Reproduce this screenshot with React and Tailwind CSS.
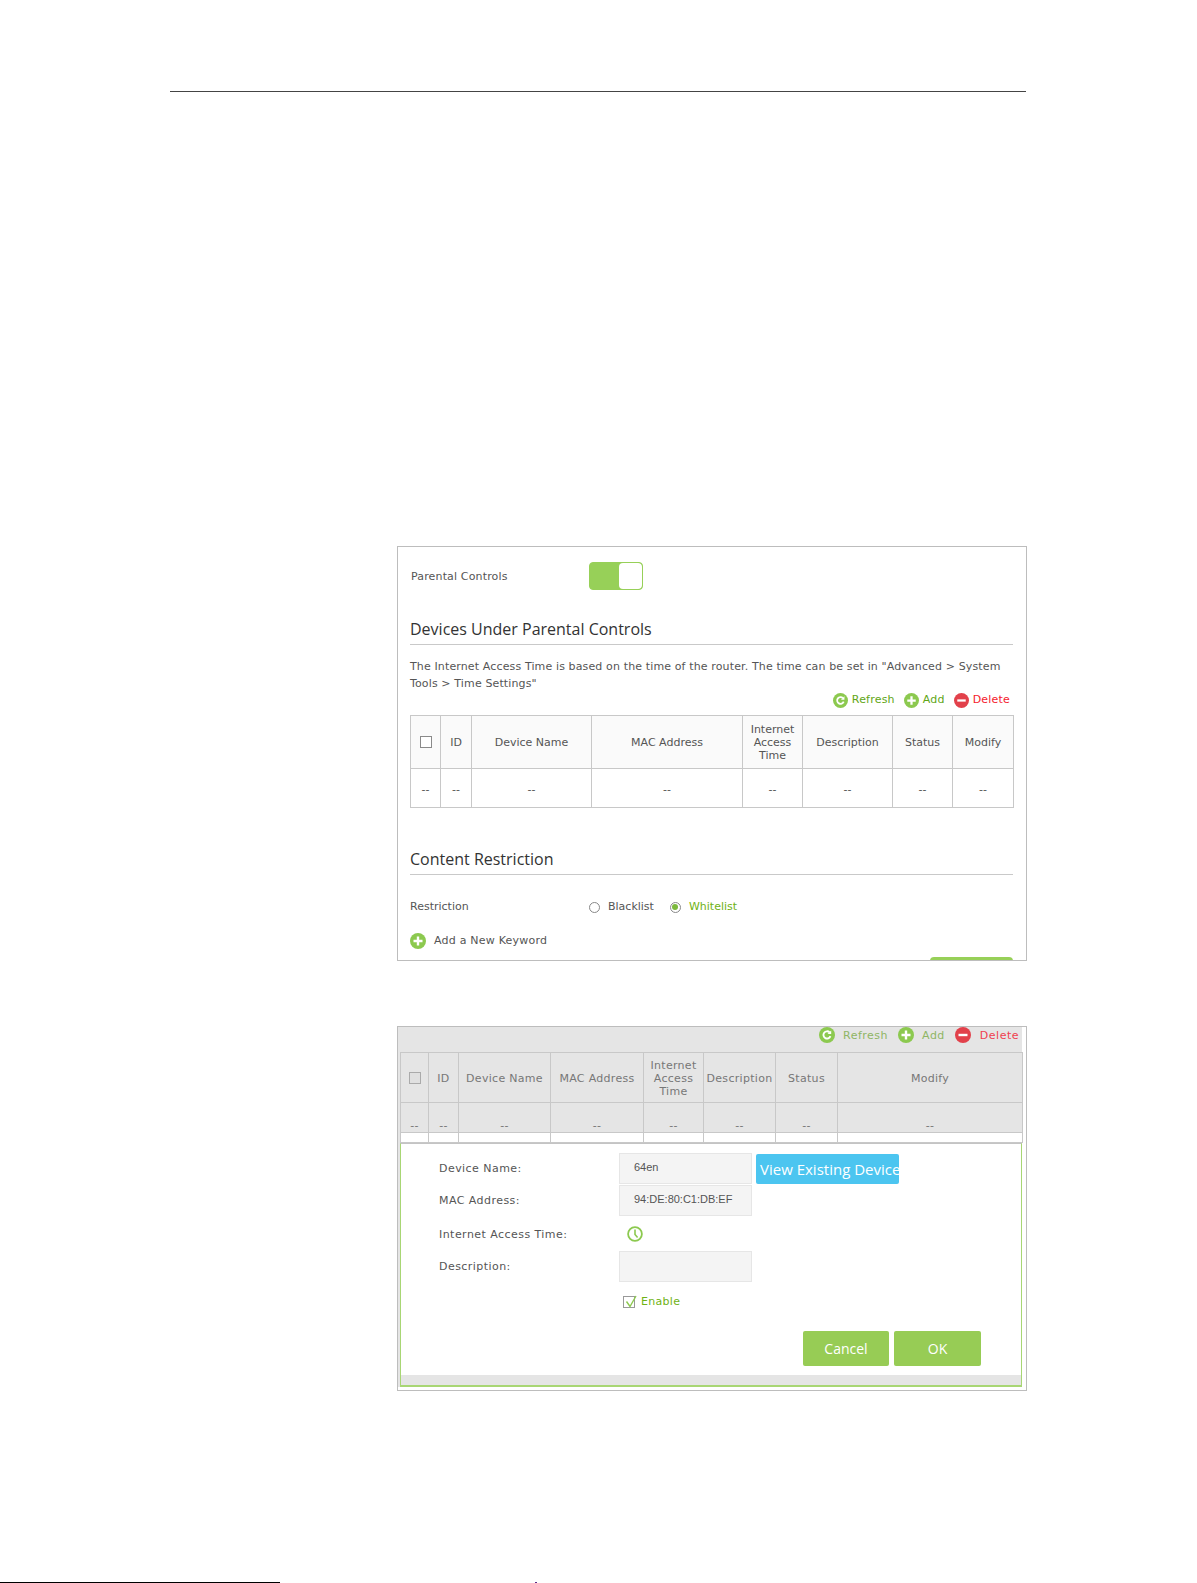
import React from 'react';

const PlusIcon = ({ className }) => (
  <svg viewBox="0 0 16 16" className={className}>
    <circle cx="8" cy="8" r="8" fill="#8cc94f" />
    <path d="M8 3.5v9M3.5 8h9" stroke="#fff" strokeWidth="2.4" />
  </svg>
);

const MinusIcon = ({ className }) => (
  <svg viewBox="0 0 16 16" className={className}>
    <circle cx="8" cy="8" r="8" fill="#e2414b" />
    <path d="M3.5 8h9" stroke="#fff" strokeWidth="2.4" />
  </svg>
);

const RefreshIcon = ({ className }) => (
  <svg viewBox="0 0 16 16" className={className}>
    <circle cx="8" cy="8" r="8" fill="#8cc94f" />
    <path d="M11.4 9.2A3.6 3.6 0 1 1 10.6 5.4" fill="none" stroke="#fff" strokeWidth="1.9" />
    <path d="M12.2 3.4v3.7H8.5z" fill="#fff" />
  </svg>
);

const ClockIcon = () => (
  <svg viewBox="0 0 16 16" className="h-[16px] w-[16px]">
    <circle cx="8" cy="8" r="6.9" fill="none" stroke="#8cc94f" strokeWidth="1.8" />
    <path d="M8 3.5V8.4l2.6 3" fill="none" stroke="#8cc94f" strokeWidth="1.6" />
  </svg>
);

const Heading = ({ children, className }) => (
  <div className={`border-b border-[#c9c9c9] font-['Open_Sans',sans-serif] text-[16px] leading-[22px] text-[#333] ${className}`}>{children}</div>
);

const firstWidths = [30, 31, 120, 151, 60, 90, 60, 61];
const secondWidths = [28, 30, 92, 93, 60, 72, 62, 185];

const heads = ['ID', 'Device Name', 'MAC Address', null, 'Description', 'Status', 'Modify'];

const InternetTime = () => (
  <>
    Internet
    <br />
    Access
    <br />
    Time
  </>
);

const DeviceTable = ({ widths, faded }) => (
  <table
    className={`table-fixed border-collapse text-[11px] ${faded ? 'tracking-[0.3px] text-[#777]' : 'text-[#555]'}`}
    style={{ width: widths.reduce((a, b) => a + b, 0) }}
  >
    <colgroup>
      {widths.map((w, i) => (
        <col key={i} style={{ width: w }} />
      ))}
    </colgroup>
    <tbody>
      <tr className={faded ? 'h-[50px] bg-[#e5e5e5]' : 'h-[53px]'}>
        <td className={`border border-[#c8c8c8] p-0 ${faded ? '' : 'bg-[#fafafa]'}`}>
          <span className={`mx-auto block h-[12px] w-[12px] border ${faded ? 'border-[#aaa] bg-[#e0e0e0]' : 'border-[#8a8a8a] bg-white'}`}></span>
        </td>
        {heads.map((h, i) => (
          <td key={i} className={`border border-[#c8c8c8] p-0 pt-[1px] text-center leading-[13px] ${faded ? '' : 'bg-[#fafafa]'}`}>
            {h || <InternetTime />}
          </td>
        ))}
      </tr>
      <tr className={faded ? 'h-[30px] bg-[#e5e5e5]' : 'h-[39px]'}>
        {widths.map((w, i) => (
          <td key={i} className={`border border-[#c8c8c8] p-0 text-center leading-[13px] ${faded ? 'pt-[15px]' : 'pt-[2px]'}`}>
            --
          </td>
        ))}
      </tr>
      {faded && (
        <tr className="h-[10px] bg-white">
          {widths.map((w, i) => (
            <td key={i} className="border border-[#c8c8c8] p-0"></td>
          ))}
        </tr>
      )}
    </tbody>
  </table>
);

const FormRow = ({ label, children, className }) => (
  <div className={`flex items-center ${className}`}>
    <span className="w-[180px] pt-[2px] text-[11px] tracking-[0.45px] text-[#555]">{label}</span>
    {children}
  </div>
);

const GrayInput = ({ children }) => (
  <div className="h-[31px] w-[133px] border border-[#e6e6e6] bg-[#f4f4f4] pl-[14px] pt-[6px] font-['Liberation_Sans',sans-serif] text-[11px] leading-[14px] text-[#555]">
    {children}
  </div>
);

export default function App() {
  return (
    <div className="h-[1583px] w-[1197px] overflow-hidden bg-white pt-[91px] font-['DejaVu_Sans',sans-serif]">
      <div className="ml-[170px] h-px w-[856px] bg-[#444]"></div>

      {/* first shot */}
      <div className="ml-[397px] mt-[454px] h-[415px] w-[630px] overflow-hidden border border-[#bdbdbd] px-[12px] text-[#555]">
        <div className="mt-[15px] flex h-[28px] items-center">
          <span className="w-[179px] pl-[1px] pt-[3px] text-[11px] tracking-[0.15px]">Parental Controls</span>
          <div className="flex h-[28px] w-[54px] overflow-hidden rounded-[4px] border border-[#97d058] bg-[#97d058]">
            <div className="ml-[29px] w-[24px] rounded-[4px] bg-white"></div>
          </div>
        </div>

        <Heading className="mt-[28px] h-[27px] w-[603px]">Devices Under Parental Controls</Heading>

        <p className="mt-[13px] w-[603px] text-[11px] leading-[17px] tracking-[0.13px]">
          The Internet Access Time is based on the time of the router. The time can be set in "Advanced &gt; System Tools &gt; Time Settings"
        </p>

        <div className="mt-[1px] flex h-[15px] w-[603px] items-center justify-end gap-[9px] pr-[3px] text-[11px] tracking-[0.2px]">
          <span className="flex items-center gap-[4px] text-[#5fa616]">
            <RefreshIcon className="h-[15px] w-[15px]" />
            Refresh
          </span>
          <span className="flex items-center gap-[4px] text-[#5fa616]">
            <PlusIcon className="h-[15px] w-[15px]" />
            Add
          </span>
          <span className="flex items-center gap-[4px] text-[#f5222d]">
            <MinusIcon className="h-[15px] w-[15px]" />
            Delete
          </span>
        </div>

        <div className="mt-[7px]">
          <DeviceTable widths={firstWidths} />
        </div>

        <Heading className="mt-[40px] h-[27px] w-[603px]">Content Restriction</Heading>

        <div className="mt-[23px] flex h-[18px] items-center text-[11px]">
          <span className="w-[179px]">Restriction</span>
          <span className="h-[11px] w-[11px] rounded-full border border-[#888]"></span>
          <span className="ml-[8px]">Blacklist</span>
          <span className="ml-[16px] flex h-[11px] w-[11px] items-center justify-center rounded-full border border-[#888]">
            <span className="h-[6px] w-[6px] rounded-full bg-[#7cb93c]"></span>
          </span>
          <span className="ml-[8px] text-[#6fb214]">Whitelist</span>
        </div>

        <div className="mt-[17px] flex h-[16px] items-center gap-[8px] text-[11px] tracking-[0.22px]">
          <PlusIcon className="h-[16px] w-[16px]" />
          Add a New Keyword
        </div>

        <div className="ml-[520px] mt-[8px] h-[8px] w-[83px] rounded-t-[4px] bg-[#97d058]"></div>
      </div>

      {/* second shot */}
      <div className="ml-[397px] mt-[65px] h-[365px] w-[630px] border border-[#bdbdbd] pb-[3px] pr-[4px]">
        <div className="flex h-full flex-col bg-[#e5e5e5] pl-[2px]">
          <div className="flex h-[25px] items-center justify-end gap-[10px] pb-[6px] pr-[3px] text-[11px] tracking-[0.5px]">
            <span className="flex items-center gap-[8px] text-[#8fb564]">
              <RefreshIcon className="-mt-[4px] h-[16px] w-[16px]" />
              Refresh
            </span>
            <span className="flex items-center gap-[8px] text-[#8fb564]">
              <PlusIcon className="-mt-[4px] h-[16px] w-[16px]" />
              Add
            </span>
            <span className="flex items-center gap-[9px] text-[#f0404f]">
              <MinusIcon className="-mt-[4px] h-[16px] w-[16px]" />
              Delete
            </span>
          </div>

          <DeviceTable widths={secondWidths} faded />

          <div className="flex h-[232px] flex-col border-x border-t border-x-[#a8d674] border-t-[#c4c4c4] bg-white pl-[38px]">
            <FormRow label="Device Name:" className="mt-[9px] h-[31px]">
              <GrayInput>64en</GrayInput>
              <div className="ml-[4px] h-[30px] w-[143px] overflow-hidden whitespace-nowrap rounded-[2px] bg-[#4cc5f0] pl-[4px] font-['Open_Sans',sans-serif] text-[15px] leading-[30px] text-white">
                View Existing Devices
              </div>
            </FormRow>
            <FormRow label="MAC Address:" className="mt-[1px] h-[31px]">
              <GrayInput>94:DE:80:C1:DB:EF</GrayInput>
            </FormRow>
            <FormRow label="Internet Access Time:" className="mt-[2px] h-[32px]">
              <span className="ml-[8px]">
                <ClockIcon />
              </span>
            </FormRow>
            <FormRow label="Description:" className="mt-[1px] h-[31px]">
              <GrayInput></GrayInput>
            </FormRow>
            <div className="ml-[184px] mt-[13px] flex h-[14px] items-center gap-[6px] text-[11px] tracking-[0.3px] text-[#6fb214]">
              <span className="relative block h-[12px] w-[12px] border border-[#999]">
                <svg viewBox="0 0 14 14" className="absolute -top-[2px] left-0 h-[14px] w-[14px]">
                  <path d="M2.5 6.5 6 11.5 12 1" fill="none" stroke="#8cc94f" strokeWidth="1.4" />
                </svg>
              </span>
              Enable
            </div>
            <div className="ml-[364px] mt-[22px] flex gap-[5px] font-['Open_Sans',sans-serif] text-[14px] text-white">
              <div className="flex h-[35px] w-[86px] items-center justify-center rounded-[2px] bg-[#97cc55]">Cancel</div>
              <div className="flex h-[35px] w-[87px] items-center justify-center rounded-[2px] bg-[#97cc55]">OK</div>
            </div>
          </div>
          <div className="flex-1 border-x border-b-2 border-[#a8d674] bg-[#e5e5e5]"></div>
        </div>
      </div>

      <div className="mt-[191px] flex h-px">
        <div className="w-[280px] bg-black"></div>
        <div className="ml-[255px] w-[2px] bg-[#5a2d8a]"></div>
      </div>
    </div>
  );
}
